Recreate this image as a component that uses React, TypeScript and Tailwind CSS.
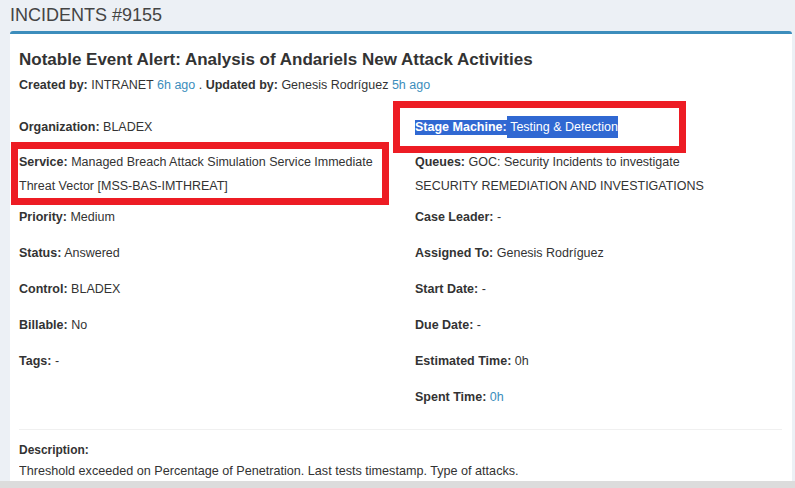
import React from "react";

const F = { fontFamily: '"Liberation Sans", Arial, sans-serif' };

function Field({ label, children }: { label: string; children?: React.ReactNode }) {
  return (
    <div className="h-[36px] leading-[24px]">
      <b className="font-bold text-[#333]">{label}:</b> <span className="text-[#333]">{children}</span>
    </div>
  );
}

export default function App() {
  return (
    <div className="w-[795px] h-[488px] overflow-hidden bg-[#ecf0f5] relative text-[12.5px] text-[#333]" style={F}>
      <div className="pl-[10px] pt-[3px] h-[31px] text-[18px] leading-[24px] text-[#444]">INCIDENTS #9155</div>
      <div className="ml-[10px] w-[782px] h-[450px] bg-white border-t-[3px] border-[#3c8dbc] rounded-t-[3px]">
        <div className="pl-[9px] pr-[10px]">
          <div className="pt-[15px] text-[17px] font-bold leading-[22px] text-[#333]">
            Notable Event Alert: Analysis of Andariels New Attack Activities
          </div>
          <div className="mt-[5px] leading-[18px]">
            <b>Created by:</b> INTRANET <span className="text-[#3c8dbc]">6h ago</span> . <b>Updated by:</b> Genesis Rodríguez{" "}
            <span className="text-[#3c8dbc]">5h ago</span>
          </div>
          <div className="mt-[21px] flex">
            <div className="w-[396px] pr-[22px]">
              <Field label="Organization">BLADEX</Field>
              <div className="h-[55px] leading-[24px] -mt-[1px]">
                <b>Service:</b> Managed Breach Attack Simulation Service Immediate Threat Vector [MSS-BAS-IMTHREAT]
              </div>
              <Field label="Priority">Medium</Field>
              <Field label="Status">Answered</Field>
              <Field label="Control">BLADEX</Field>
              <Field label="Billable">No</Field>
              <Field label="Tags">-</Field>
            </div>
            <div className="flex-1">
              <div className="h-[36px] leading-[24px]">
                <span className="bg-[#3068d2] text-white pb-[1px]">
                  <b>Stage Machine:</b>
                </span>
                <span className="bg-[#3068d2] text-white inline-block leading-[22px] align-top mt-[1px]">
                  &nbsp;Testing &amp; Detection
                </span>
              </div>
              <div className="h-[55px] leading-[24px] -mt-[1px]">
                <b>Queues:</b> GOC: Security Incidents to investigate
                <br />
                SECURITY REMEDIATION AND INVESTIGATIONS
              </div>
              <Field label="Case Leader">-</Field>
              <Field label="Assigned To">Genesis Rodríguez</Field>
              <Field label="Start Date">-</Field>
              <Field label="Due Date">-</Field>
              <Field label="Estimated Time">0h</Field>
              <div className="h-[36px] leading-[24px]">
                <b>Spent Time:</b> <span className="text-[#3c8dbc]">0h</span>
              </div>
            </div>
          </div>
          <div className="mt-[8px] border-t border-[#f0f0f0] pt-[11px]">
            <div className="font-bold origin-left scale-x-[0.92] leading-[18px] text-[13px]">Description:</div>
            <div className="mt-[3px] origin-left scale-x-[0.97] whitespace-nowrap leading-[18px] text-[13px]">
              Threshold exceeded on Percentage of Penetration. Last tests timestamp. Type of attacks.
            </div>
          </div>
        </div>
      </div>
      <div className="absolute left-0 right-0 top-[481px] h-[7px] bg-[#dcdcdc]" />
      <div className="absolute left-[11px] top-[142px] w-[378px] h-[63px] border-[7px] border-[#ed1c24]" />
      <div className="absolute left-[393px] top-[101px] w-[293px] h-[52px] border-[7px] border-[#ed1c24]" />
    </div>
  );
}
